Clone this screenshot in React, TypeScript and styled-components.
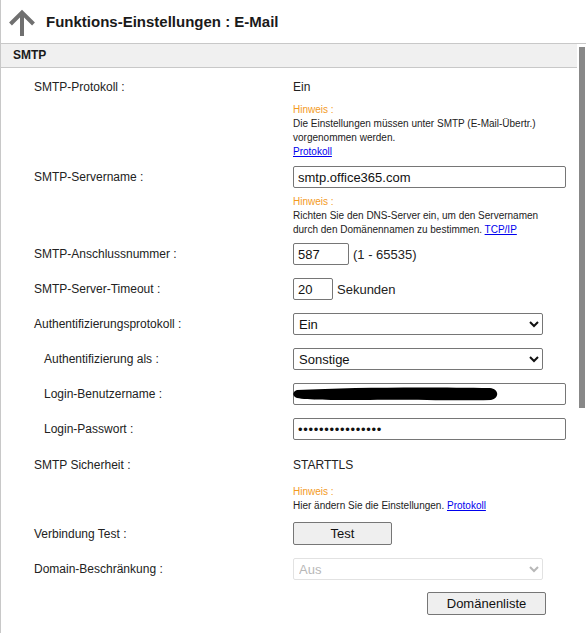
import * as React from "react";
import styled, { createGlobalStyle } from "styled-components";

const GlobalStyle = createGlobalStyle`
  html, body {
    margin: 0;
    height: 100%;
    overflow: hidden;
    background: #fff;
  }
  body {
    font-family: "Liberation Sans", Arial, sans-serif;
    color: #222;
  }
`;

const Page = styled.div`
  height: 100vh;
  display: flex;
  flex-direction: column;
  border-left: 1px solid #c8c8c8;
  box-sizing: border-box;
`;

const Header = styled.header`
  height: 43px;
  flex: none;
  display: flex;
  align-items: center;
  gap: 10px;
  padding-left: 7px;
  border-bottom: 1px solid #c8c8c8;
`;

const Title = styled.h1`
  margin: 0;
  font-size: 15px;
  font-weight: bold;
  color: #1a1a1a;
`;

const Scroller = styled.div`
  position: relative;
  flex: 1;
  overflow: hidden;
  padding-right: 9px;
`;

const ScrollThumb = styled.div`
  position: absolute;
  top: 3px;
  right: 1px;
  width: 6px;
  height: 361px;
  background: #888;
`;

const SectionBar = styled.div`
  height: 23px;
  line-height: 23px;
  padding-left: 12px;
  background: #f0f0f0;
  border-bottom: 1px solid #c8c8c8;
  font-size: 12px;
  font-weight: bold;
  color: #1a1a1a;
`;

const Form = styled.div`
  padding-top: 8px;
`;

const Row = styled.div<{ $indent?: boolean; $mt: number }>`
  display: grid;
  grid-template-columns: ${(p) => (p.$indent ? 249 : 259)}px 1fr;
  padding-left: ${(p) => (p.$indent ? 43 : 33)}px;
  margin-top: ${(p) => p.$mt}px;
  align-items: center;
  min-height: 22px;
`;

const Label = styled.span`
  font-size: 12px;
  color: #222;
`;

const Value = styled.span`
  font-size: 12px;
  color: #222;
`;

const Inline = styled.div`
  display: flex;
  align-items: center;
  gap: 4px;
  font-size: 13px;
`;

const Hint = styled.div`
  font-size: 10px;
  line-height: 14px;
  color: #222;
`;

const HintTitle = styled.div`
  color: #f39a1e;
`;

const Link = styled.a`
  color: #0000ee;
  text-decoration: underline;
  cursor: pointer;
`;

const TextInput = styled.input<{ $w: number }>`
  width: ${(p) => p.$w}px;
  height: 22px;
  box-sizing: border-box;
  border: 1px solid #767676;
  border-radius: 2px;
  padding: 0 4px;
  font-family: "Liberation Sans", Arial, sans-serif;
  font-size: 13px;
  color: #111;
  background: #fff;
  outline: none;

  &[type="password"] {
    letter-spacing: 0.7px;
  }
`;

const Select = styled.select`
  width: 250px;
  height: 22px;
  box-sizing: border-box;
  border: 1px solid #767676;
  border-radius: 2px;
  padding: 0 1px;
  font-family: "Liberation Sans", Arial, sans-serif;
  font-size: 13px;
  color: #111;
  background: #fff;

  &:disabled {
    color: #9a9a9a;
    border-color: #d6d6d6;
  }
`;

const Button = styled.button<{ $w: number; $ml?: number }>`
  width: ${(p) => p.$w}px;
  height: 23px;
  margin-left: ${(p) => p.$ml ?? 0}px;
  border: 1px solid #767676;
  border-radius: 2px;
  background: #efefef;
  font-family: "Liberation Sans", Arial, sans-serif;
  font-size: 13px;
  color: #111;
`;

const Redacted = styled.div`
  position: relative;
  width: 273px;
`;

const Scribble = styled.svg`
  position: absolute;
  left: -1px;
  top: 3px;
  pointer-events: none;
`;

const UpArrow = () => (
  <svg width="28" height="28" viewBox="0 0 28 28" fill="none">
    <path d="M14 4 V28" stroke="#707070" strokeWidth="4" />
    <path d="M2.5 16 L14 4.5 L25.5 16" stroke="#707070" strokeWidth="4" />
  </svg>
);

const Empty = () => <span />;

export default function App() {
  return (
    <Page>
      <GlobalStyle />
      <Header>
        <UpArrow />
        <Title>Funktions-Einstellungen : E-Mail</Title>
      </Header>
      <Scroller>
        <SectionBar>SMTP</SectionBar>
        <Form>
          <Row $mt={0}>
            <Label>SMTP-Protokoll :</Label>
            <Value>Ein</Value>
          </Row>
          <Row $mt={5}>
            <Empty />
            <Hint>
              <HintTitle>Hinweis :</HintTitle>
              Die Einstellungen müssen unter SMTP (E-Mail-Übertr.)
              <br />
              vorgenommen werden.
              <br />
              <Link>Protokoll</Link>
            </Hint>
          </Row>
          <Row $mt={7}>
            <Label>SMTP-Servername :</Label>
            <TextInput $w={273} defaultValue="smtp.office365.com" />
          </Row>
          <Row $mt={7}>
            <Empty />
            <Hint>
              <HintTitle>Hinweis :</HintTitle>
              Richten Sie den DNS-Server ein, um den Servernamen
              <br />
              durch den Domänennamen zu bestimmen. <Link>TCP/IP</Link>
            </Hint>
          </Row>
          <Row $mt={6}>
            <Label>SMTP-Anschlussnummer :</Label>
            <Inline>
              <TextInput $w={56} defaultValue="587" />
              <span>(1 - 65535)</span>
            </Inline>
          </Row>
          <Row $mt={13}>
            <Label>SMTP-Server-Timeout :</Label>
            <Inline>
              <TextInput $w={40} defaultValue="20" />
              <span>Sekunden</span>
            </Inline>
          </Row>
          <Row $mt={13}>
            <Label>Authentifizierungsprotokoll :</Label>
            <Select defaultValue="Ein">
              <option>Ein</option>
              <option>Aus</option>
            </Select>
          </Row>
          <Row $mt={13} $indent>
            <Label>Authentifizierung als :</Label>
            <Select defaultValue="Sonstige">
              <option>Sonstige</option>
            </Select>
          </Row>
          <Row $mt={13} $indent>
            <Label>Login-Benutzername :</Label>
            <Redacted>
              <TextInput $w={273} defaultValue="" />
              <Scribble width="210" height="17" viewBox="0 0 210 17">
                <path
                  d="M5 4 C 60 1, 140 1, 198 2 C 207 3, 208 12, 199 14 C 150 15, 120 13, 70 14 C 40 14, 15 14, 5 12 C 0 10, 0 6, 5 4 Z"
                  fill="#000"
                />
              </Scribble>
            </Redacted>
          </Row>
          <Row $mt={13} $indent>
            <Label>Login-Passwort :</Label>
            <TextInput $w={273} type="password" defaultValue="xxxxxxxxxxxxxxxx" />
          </Row>
          <Row $mt={14}>
            <Label>SMTP Sicherheit :</Label>
            <Value>STARTTLS</Value>
          </Row>
          <Row $mt={9}>
            <Empty />
            <Hint>
              <HintTitle>Hinweis :</HintTitle>
              Hier ändern Sie die Einstellungen. <Link>Protokoll</Link>
            </Hint>
          </Row>
          <Row $mt={9}>
            <Label>Verbindung Test :</Label>
            <div>
              <Button $w={99}>Test</Button>
            </div>
          </Row>
          <Row $mt={13}>
            <Label>Domain-Beschränkung :</Label>
            <Select disabled defaultValue="Aus">
              <option>Aus</option>
            </Select>
          </Row>
          <Row $mt={12}>
            <Empty />
            <div>
              <Button $w={119} $ml={134}>Domänenliste</Button>
            </div>
          </Row>
        </Form>
        <ScrollThumb />
      </Scroller>
    </Page>
  );
}
